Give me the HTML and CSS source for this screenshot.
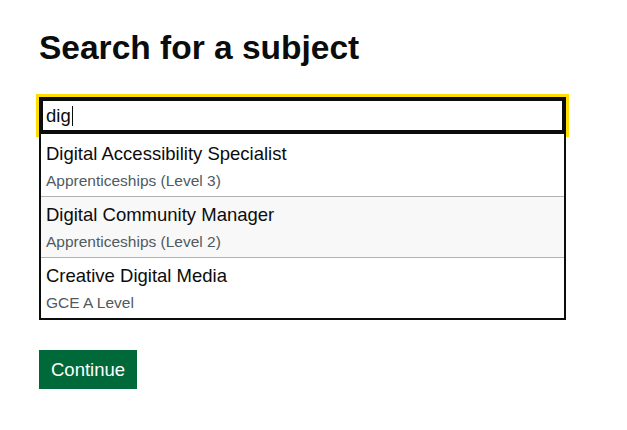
FILE: index.html
```html
<!DOCTYPE html>
<html lang="en">
<head>
<meta charset="utf-8">
<title>Search for a subject</title>
<link rel="stylesheet" href="styles.css">
</head>
<body>
<main class="page">
  <h1 class="heading">Search for a subject</h1>
  <div class="form-group">
    <div class="autocomplete">
      <div class="input" role="combobox" aria-expanded="true">dig<span class="caret"></span></div>
      <ul class="menu" role="listbox">
        <li class="option first">
          <span class="option-title">Digital Accessibility Specialist</span>
          <span class="option-hint">Apprenticeships (Level 3)</span>
        </li>
        <li class="option odd">
          <span class="option-title">Digital Community Manager</span>
          <span class="option-hint">Apprenticeships (Level 2)</span>
        </li>
        <li class="option last">
          <span class="option-title">Creative Digital Media</span>
          <span class="option-hint">GCE A Level</span>
        </li>
      </ul>
    </div>
  </div>
  <button class="button" type="button">Continue</button>
</main>
</body>
</html>
```
FILE: styles.css
```css
html, body {
  margin: 0;
  padding: 0;
  background: #ffffff;
}

body {
  font-family: "Liberation Sans", Arial, sans-serif;
  color: #0b0c0c;
}

.page {
  padding: 30px 39px 0;
}

.heading {
  margin: 0 0 31px;
  font-size: 33.5px;
  line-height: 36px;
  font-weight: 700;
}

.form-group {
  width: 527px;
  margin-bottom: 30px;
}

.autocomplete {
  position: relative;
}

.input {
  box-sizing: border-box;
  height: 37px;
  border: 2px solid #0b0c0c;
  box-shadow: inset 0 0 0 2px #0b0c0c;
  outline: 3px solid #ffdd00;
  padding: 0 5px;
  font-size: 18.5px;
  line-height: 33px;
  background: #fff;
  display: flex;
  align-items: center;
}

.caret {
  display: inline-block;
  width: 1px;
  height: 20px;
  background: #0b0c0c;
  margin-left: 1px;
}

.menu {
  position: relative;
  z-index: 1;
  list-style: none;
  margin: 0;
  padding: 0;
  border: 2px solid #0b0c0c;
  border-top: 0;
  background: #fff;
}

.option {
  display: flex;
  flex-direction: column;
  padding: 5px 5px 3px;
  border-bottom: 1px solid #b1b4b6;
}

.option.first {
  padding-top: 7px;
}

.option.odd {
  background: #f8f8f8;
}

.option.last {
  border-bottom: 0;
  padding-bottom: 3px;
}

.option-title {
  font-size: 18.5px;
  line-height: 25px;
}

.option-hint {
  font-size: 15.5px;
  line-height: 25px;
  padding-top: 2px;
  color: #505a5f;
}

.button {
  font-family: "Liberation Sans", Arial, sans-serif;
  font-size: 18.5px;
  line-height: 19px;
  color: #ffffff;
  background: #00693a;
  border: 2px solid transparent;
  border-radius: 0;
  box-shadow: 0 2px 0 #002d18;
  padding: 8px 10px 8px;
  margin: 0;
  cursor: pointer;
}
```
